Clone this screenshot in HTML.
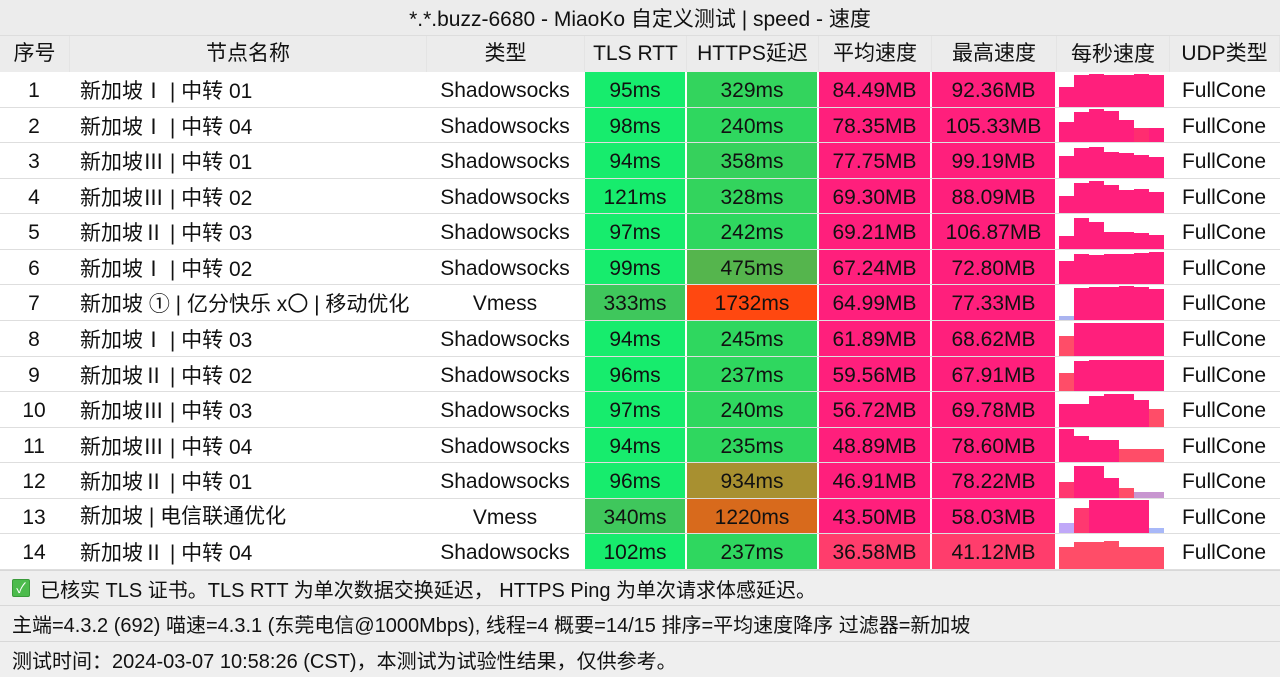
<!DOCTYPE html>
<html><head><meta charset="utf-8"><style>
*{margin:0;padding:0;box-sizing:border-box}
body{width:1280px;height:677px;background:#fff;font-family:"Liberation Sans","Noto Sans CJK SC",sans-serif;font-size:21px;color:#111;position:relative;overflow:hidden}
.r{position:absolute;left:0;width:1280px;display:flex}
.c{height:100%;line-height:37px;text-align:center;white-space:nowrap;border-right:2px solid #fff;overflow:hidden}
.hd{background:#ececec}
.hd .c{border-right:1px solid #e4e4e4;line-height:36px}
.row{height:35.57px;border-bottom:1px solid #dedede}
.k{font-family:"Noto Sans CJK SC",sans-serif}
.w0{width:70px}.w1{width:357px;text-align:left;padding-left:10px;line-height:36px}.w2{width:158px}.w3{width:102px}.w4{width:132px}.w5{width:113px}.w6{width:125px}.w7{width:113px;display:flex;align-items:flex-end;padding:1px 2px 0 2px}.w8{width:110px}
.g{background:#17ec6d}.p{background:#ff1f7c}
.b{width:15px;background:#ff1f7c;display:block}
.ft{background:#efefef;height:36px;padding-left:12px;align-items:center;border-top:1px solid #d8d8d8;font-size:20px}
</style></head><body>
<div class="r hd" style="top:0;height:36px;justify-content:center;align-items:center;border-bottom:1px solid #ddd">*.*.buzz-6680 - MiaoKo 自定义测试 | speed - 速度</div>
<div class="r hd" style="top:36px;height:36px"><div class="c w0">序号</div><div class="c w1" style="text-align:center;padding:0;line-height:36px">节点名称</div><div class="c w2">类型</div><div class="c w3">TLS RTT</div><div class="c w4">HTTPS延迟</div><div class="c w5">平均速度</div><div class="c w6">最高速度</div><div class="c w7" style="display:block">每秒速度</div><div class="c w8">UDP类型</div></div>

<div class="r row" style="top:72px"><div class="c w0">1</div><div class="c w1">新加坡<span class="k">Ⅰ</span> | 中转 01</div><div class="c w2">Shadowsocks</div><div class="c w3 g">95ms</div><div class="c w4" style="background:#33d45d">329ms</div><div class="c w5 p">84.49MB</div><div class="c w6 p">92.36MB</div><div class="c w7"><i class="b" style="height:20px"></i><i class="b" style="height:32px"></i><i class="b" style="height:33px"></i><i class="b" style="height:32px"></i><i class="b" style="height:32px"></i><i class="b" style="height:33px"></i><i class="b" style="height:32px"></i></div><div class="c w8">FullCone</div></div>
<div class="r row" style="top:107.57px"><div class="c w0">2</div><div class="c w1">新加坡<span class="k">Ⅰ</span> | 中转 04</div><div class="c w2">Shadowsocks</div><div class="c w3 g">98ms</div><div class="c w4" style="background:#2fd75f">240ms</div><div class="c w5 p">78.35MB</div><div class="c w6 p">105.33MB</div><div class="c w7"><i class="b" style="height:20px"></i><i class="b" style="height:30px"></i><i class="b" style="height:33px"></i><i class="b" style="height:31px"></i><i class="b" style="height:22px"></i><i class="b" style="height:14px;background:#ff2d70"></i><i class="b" style="height:14px"></i></div><div class="c w8">FullCone</div></div>
<div class="r row" style="top:143.14px"><div class="c w0">3</div><div class="c w1">新加坡<span class="k">Ⅲ</span> | 中转 01</div><div class="c w2">Shadowsocks</div><div class="c w3 g">94ms</div><div class="c w4" style="background:#36d15c">358ms</div><div class="c w5 p">77.75MB</div><div class="c w6 p">99.19MB</div><div class="c w7"><i class="b" style="height:22px"></i><i class="b" style="height:30px"></i><i class="b" style="height:31px"></i><i class="b" style="height:26px"></i><i class="b" style="height:25px"></i><i class="b" style="height:23px"></i><i class="b" style="height:21px"></i></div><div class="c w8">FullCone</div></div>
<div class="r row" style="top:178.71px"><div class="c w0">4</div><div class="c w1">新加坡<span class="k">Ⅲ</span> | 中转 02</div><div class="c w2">Shadowsocks</div><div class="c w3 g">121ms</div><div class="c w4" style="background:#33d45d">328ms</div><div class="c w5 p">69.30MB</div><div class="c w6 p">88.09MB</div><div class="c w7"><i class="b" style="height:17px"></i><i class="b" style="height:30px"></i><i class="b" style="height:32px"></i><i class="b" style="height:28px"></i><i class="b" style="height:23px"></i><i class="b" style="height:24px"></i><i class="b" style="height:21px"></i></div><div class="c w8">FullCone</div></div>
<div class="r row" style="top:214.28px"><div class="c w0">5</div><div class="c w1">新加坡<span class="k">Ⅱ</span> | 中转 03</div><div class="c w2">Shadowsocks</div><div class="c w3 g">97ms</div><div class="c w4" style="background:#2fd75f">242ms</div><div class="c w5 p">69.21MB</div><div class="c w6 p">106.87MB</div><div class="c w7"><i class="b" style="height:13px"></i><i class="b" style="height:31px"></i><i class="b" style="height:27px"></i><i class="b" style="height:17px"></i><i class="b" style="height:17px"></i><i class="b" style="height:16px"></i><i class="b" style="height:14px"></i></div><div class="c w8">FullCone</div></div>
<div class="r row" style="top:249.85px"><div class="c w0">6</div><div class="c w1">新加坡<span class="k">Ⅰ</span> | 中转 02</div><div class="c w2">Shadowsocks</div><div class="c w3 g">99ms</div><div class="c w4" style="background:#55b54d">475ms</div><div class="c w5 p">67.24MB</div><div class="c w6 p">72.80MB</div><div class="c w7"><i class="b" style="height:23px"></i><i class="b" style="height:30px"></i><i class="b" style="height:29px"></i><i class="b" style="height:30px"></i><i class="b" style="height:30px"></i><i class="b" style="height:31px"></i><i class="b" style="height:32px"></i></div><div class="c w8">FullCone</div></div>
<div class="r row" style="top:285.42px"><div class="c w0">7</div><div class="c w1">新加坡 <span class="k">①</span> | 亿分快乐 x<span class="k">〇</span> | 移动优化</div><div class="c w2">Vmess</div><div class="c w3" style="background:#3fc75c">333ms</div><div class="c w4" style="background:#ff4810">1732ms</div><div class="c w5 p">64.99MB</div><div class="c w6 p">77.33MB</div><div class="c w7"><i class="b" style="height:4px;background:#aab4f0"></i><i class="b" style="height:32px"></i><i class="b" style="height:33px"></i><i class="b" style="height:33px"></i><i class="b" style="height:34px"></i><i class="b" style="height:33px"></i><i class="b" style="height:31px"></i></div><div class="c w8">FullCone</div></div>
<div class="r row" style="top:320.99px"><div class="c w0">8</div><div class="c w1">新加坡<span class="k">Ⅰ</span> | 中转 03</div><div class="c w2">Shadowsocks</div><div class="c w3 g">94ms</div><div class="c w4" style="background:#2fd75f">245ms</div><div class="c w5 p">61.89MB</div><div class="c w6 p">68.62MB</div><div class="c w7"><i class="b" style="height:20px;background:#ff4d68"></i><i class="b" style="height:33px"></i><i class="b" style="height:33px"></i><i class="b" style="height:33px"></i><i class="b" style="height:33px"></i><i class="b" style="height:33px"></i><i class="b" style="height:33px"></i></div><div class="c w8">FullCone</div></div>
<div class="r row" style="top:356.56px"><div class="c w0">9</div><div class="c w1">新加坡<span class="k">Ⅱ</span> | 中转 02</div><div class="c w2">Shadowsocks</div><div class="c w3 g">96ms</div><div class="c w4" style="background:#2fd75f">237ms</div><div class="c w5 p">59.56MB</div><div class="c w6 p">67.91MB</div><div class="c w7"><i class="b" style="height:18px;background:#ff4d68"></i><i class="b" style="height:30px"></i><i class="b" style="height:31px"></i><i class="b" style="height:31px"></i><i class="b" style="height:31px"></i><i class="b" style="height:31px"></i><i class="b" style="height:31px"></i></div><div class="c w8">FullCone</div></div>
<div class="r row" style="top:392.13px"><div class="c w0">10</div><div class="c w1">新加坡<span class="k">Ⅲ</span> | 中转 03</div><div class="c w2">Shadowsocks</div><div class="c w3 g">97ms</div><div class="c w4" style="background:#2fd75f">240ms</div><div class="c w5 p">56.72MB</div><div class="c w6 p">69.78MB</div><div class="c w7"><i class="b" style="height:23px"></i><i class="b" style="height:23px"></i><i class="b" style="height:31px"></i><i class="b" style="height:33px"></i><i class="b" style="height:33px"></i><i class="b" style="height:27px"></i><i class="b" style="height:18px;background:#ff4d68"></i></div><div class="c w8">FullCone</div></div>
<div class="r row" style="top:427.7px"><div class="c w0">11</div><div class="c w1">新加坡<span class="k">Ⅲ</span> | 中转 04</div><div class="c w2">Shadowsocks</div><div class="c w3 g">94ms</div><div class="c w4" style="background:#2fd75f">235ms</div><div class="c w5 p">48.89MB</div><div class="c w6 p">78.60MB</div><div class="c w7"><i class="b" style="height:33px"></i><i class="b" style="height:26px"></i><i class="b" style="height:22px"></i><i class="b" style="height:22px"></i><i class="b" style="height:13px;background:#ff4d68"></i><i class="b" style="height:13px;background:#ff4d68"></i><i class="b" style="height:13px;background:#ff4d68"></i></div><div class="c w8">FullCone</div></div>
<div class="r row" style="top:463.27px"><div class="c w0">12</div><div class="c w1">新加坡<span class="k">Ⅱ</span> | 中转 01</div><div class="c w2">Shadowsocks</div><div class="c w3 g">96ms</div><div class="c w4" style="background:#a89030">934ms</div><div class="c w5 p">46.91MB</div><div class="c w6 p">78.22MB</div><div class="c w7"><i class="b" style="height:16px;background:#ff3870"></i><i class="b" style="height:32px"></i><i class="b" style="height:32px"></i><i class="b" style="height:20px"></i><i class="b" style="height:10px;background:#ff4d68"></i><i class="b" style="height:6px;background:#c896d0"></i><i class="b" style="height:6px;background:#c896d0"></i></div><div class="c w8">FullCone</div></div>
<div class="r row" style="top:498.84px"><div class="c w0">13</div><div class="c w1">新加坡 | 电信联通优化</div><div class="c w2">Vmess</div><div class="c w3" style="background:#3fc75c">340ms</div><div class="c w4" style="background:#d86a1c">1220ms</div><div class="c w5 p">43.50MB</div><div class="c w6 p">58.03MB</div><div class="c w7"><i class="b" style="height:10px;background:#c0a8f8"></i><i class="b" style="height:25px;background:#ff3870"></i><i class="b" style="height:33px"></i><i class="b" style="height:33px"></i><i class="b" style="height:33px"></i><i class="b" style="height:33px"></i><i class="b" style="height:5px;background:#a8b8f8"></i></div><div class="c w8">FullCone</div></div>
<div class="r row" style="top:534.41px;height:35.59px"><div class="c w0">14</div><div class="c w1">新加坡<span class="k">Ⅱ</span> | 中转 04</div><div class="c w2">Shadowsocks</div><div class="c w3 g">102ms</div><div class="c w4" style="background:#2fd75f">237ms</div><div class="c w5" style="background:#ff3d6c">36.58MB</div><div class="c w6" style="background:#ff3d6c">41.12MB</div><div class="c w7"><i class="b" style="height:22px;background:#ff4d68"></i><i class="b" style="height:27px;background:#ff4d68"></i><i class="b" style="height:27px;background:#ff4d68"></i><i class="b" style="height:28px;background:#ff4d68"></i><i class="b" style="height:22px;background:#ff4d68"></i><i class="b" style="height:22px;background:#ff4d68"></i><i class="b" style="height:22px;background:#ff4d68"></i></div><div class="c w8">FullCone</div></div>

<div class="r ft" style="top:570px;height:35px"><span style="display:inline-block;width:18px;height:18px;background:#4cbb4c;border:1px solid #3a9a3a;color:#fff;font-size:14px;line-height:16px;text-align:center;margin-right:10px;border-radius:2px">✓</span>已核实 TLS 证书。TLS RTT 为单次数据交换延迟， HTTPS Ping 为单次请求体感延迟。</div>
<div class="r ft" style="top:605px;height:36px">主端=4.3.2 (692) 喵速=4.3.1 (东莞电信@1000Mbps), 线程=4 概要=14/15 排序=平均速度降序 过滤器=新加坡</div>
<div class="r ft" style="top:641px;height:36px">测试时间：2024-03-07 10:58:26 (CST)，本测试为试验性结果，仅供参考。</div>
</body></html>
